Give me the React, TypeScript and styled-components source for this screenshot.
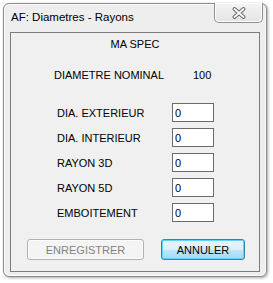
import React from "react";
import styled, { createGlobalStyle } from "styled-components";

const GlobalStyle = createGlobalStyle`
  body {
    margin: 0;
    background: #ffffff;
    font-family: "Liberation Sans", Arial, sans-serif;
  }
`

const Page = styled.div`
  padding: 3px;
`

const Window = styled.div`
  width: 262px;
  border: 1px solid #8d8d8d;
  border-radius: 6px;
  background: #eeeeee;
  box-shadow: 1px 1px 3px rgba(0, 0, 0, 0.35), inset 0 0 0 1px #fbfbfb;
  padding-bottom: 4px;
`

const TitleBar = styled.div`
  height: 28px;
  display: flex;
  justify-content: space-between;
  align-items: flex-start;
`

const Title = styled.div`
  margin: 7px 0 0 7px;
  font-size: 11.5px;
  line-height: 13px;
  color: #000;
`

const CloseButton = styled.div`
  margin: -1px 3px 0 0;
  width: 47px;
  height: 19px;
  border: 1px solid #8f8f8f;
  border-top: none;
  border-radius: 0 0 5px 5px;
  background: linear-gradient(#f4f4f4, #e4e4e4);
  box-shadow: inset 0 0 0 1px #fdfdfd;
  display: flex;
  align-items: center;
  justify-content: center;
`

const Client = styled.div`
  margin-left: 6px;
  width: 248px;
  border: 1px solid #7c7c7c;
  background: #f0f0f0;
  display: flex;
  flex-direction: column;
  font-size: 11px;
  color: #000;
`

const Heading = styled.div`
  margin-top: 5px;
  line-height: 13px;
  text-align: center;
`

const NominalRow = styled.div`
  margin-top: 18px;
  padding-left: 43px;
  display: flex;
  line-height: 13px;
`

const NominalLabel = styled.span`
  width: 139px;
`

const Fields = styled.div`
  margin-top: 21px;
  padding-left: 46px;
  display: flex;
  flex-direction: column;
  gap: 6px;
`

const FieldRow = styled.div`
  display: flex;
  align-items: center;
  height: 19px;
`

const FieldLabel = styled.span`
  width: 115px;
`

const Input = styled.input`
  box-sizing: border-box;
  width: 42px;
  height: 19px;
  margin: 0;
  padding: 0 2px;
  border: 1px solid #6b6b6b;
  background: #fff;
  font: 11px "Liberation Sans", Arial, sans-serif;
  color: #000;
  outline: none;
`

const Buttons = styled.div`
  margin: 17px 0 11px;
  padding-left: 16px;
  display: flex;
  gap: 17px;
`

const Button = styled.button<{ $primary?: boolean; $width: number }>`
  box-sizing: border-box;
  width: ${p => p.$width}px;
  height: 21px;
  margin: 0;
  padding: 0;
  border-radius: 3px;
  font: 11px "Liberation Sans", Arial, sans-serif;
  border: 1px solid ${p => (p.$primary ? "#3c7fb1" : "#adb2b5")};
  color: ${p => (p.$primary ? "#000" : "#838383")};
  background: ${p => p.$primary
    ? "linear-gradient(#eaf6fd 0%, #d9f0fc 50%, #bee6fd 51%, #a7d9f5 100%)"
    : "#f4f4f4"};
  box-shadow: ${p => (p.$primary ? "inset 0 0 0 1px #5fd3f8" : "inset 0 0 0 1px #fbfbfb")};
`

const fields = ["DIA. EXTERIEUR", "DIA. INTERIEUR", "RAYON 3D", "RAYON 5D", "EMBOITEMENT"]

function App() {
  return (
      <Page>
        <GlobalStyle/>
        <Window>
          <TitleBar>
            <Title>AF: Diametres - Rayons</Title>
            <CloseButton>
              <svg width="14" height="12" viewBox="0 0 14 12">
                <path d="M2.5 2 L11.5 10 M11.5 2 L2.5 10" stroke="#6a6a6a" strokeWidth="3.8" strokeLinecap="round"/>
                <path d="M2.5 2 L11.5 10 M11.5 2 L2.5 10" stroke="#fafafa" strokeWidth="1.8" strokeLinecap="round"/>
              </svg>
            </CloseButton>
          </TitleBar>
          <Client>
            <Heading>MA SPEC</Heading>
            <NominalRow>
              <NominalLabel>DIAMETRE NOMINAL</NominalLabel>
              <span>100</span>
            </NominalRow>
            <Fields>
              {fields.map(name => (
                  <FieldRow key={name}>
                    <FieldLabel>{name}</FieldLabel>
                    <Input defaultValue="0"/>
                  </FieldRow>
              ))}
            </Fields>
            <Buttons>
              <Button $width={117} disabled>ENREGISTRER</Button>
              <Button $width={84} $primary>ANNULER</Button>
            </Buttons>
          </Client>
        </Window>
      </Page>
  )
}

export default App
